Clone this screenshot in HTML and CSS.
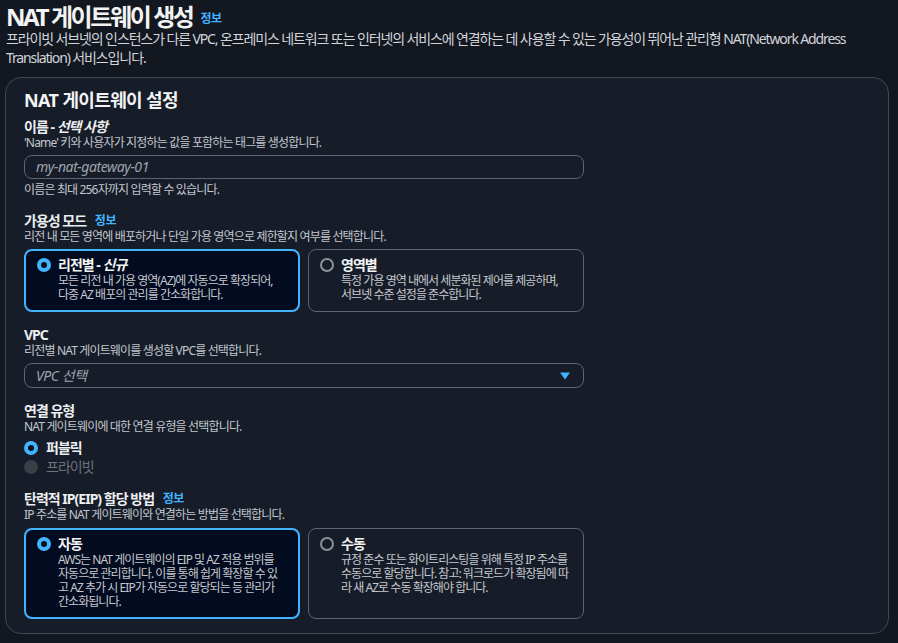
FILE: index.html
```html
<!DOCTYPE html>
<html lang="ko">
<head>
<meta charset="utf-8">
<title>NAT 게이트웨이 생성</title>
<link rel="stylesheet" href="styles.css">
</head>
<body>
<div class="page">
  <header class="page-header">
    <h1 class="page-title">NAT 게이트웨이 생성 <a class="info info-title">정보</a></h1>
    <p class="page-desc">프라이빗 서브넷의 인스턴스가 다른 VPC, 온프레미스 네트워크 또는 인터넷의 서비스에 연결하는 데 사용할 수 있는 가용성이 뛰어난 관리형 NAT(Network Address Translation) 서비스입니다.</p>
  </header>

  <section class="panel">
    <h2 class="panel-title">NAT 게이트웨이 설정</h2>

    <div class="field field-first">
      <div class="label">이름 - <em>선택 사항</em></div>
      <div class="hint">'Name' 키와 사용자가 지정하는 값을 포함하는 태그를 생성합니다.</div>
      <div class="control">
        <div class="input"><span class="placeholder">my-nat-gateway-01</span></div>
      </div>
      <div class="constraint">이름은 최대 256자까지 입력할 수 있습니다.</div>
    </div>

    <div class="field">
      <div class="label">가용성 모드 <a class="info">정보</a></div>
      <div class="hint">리전 내 모든 영역에 배포하거나 단일 가용 영역으로 제한할지 여부를 선택합니다.</div>
      <div class="control tiles">
        <div class="tile selected">
          <span class="radio checked"></span>
          <div class="tile-body">
            <div class="tile-title">리전별 - <em>신규</em></div>
            <div class="tile-desc">모든 리전 내 가용 영역(AZ)에 자동으로 확장되어, 다중 AZ 배포의 관리를 간소화합니다.</div>
          </div>
        </div>
        <div class="tile">
          <span class="radio"></span>
          <div class="tile-body">
            <div class="tile-title">영역별</div>
            <div class="tile-desc">특정 가용 영역 내에서 세분화된 제어를 제공하며, 서브넷 수준 설정을 준수합니다.</div>
          </div>
        </div>
      </div>
    </div>

    <div class="field">
      <div class="label">VPC</div>
      <div class="hint">리전별 NAT 게이트웨이를 생성할 VPC를 선택합니다.</div>
      <div class="control">
        <div class="input select">
          <span class="placeholder">VPC 선택</span>
          <svg class="caret" width="10" height="8" viewBox="0 0 10 8"><path d="M0 0.5 H10 L5 7.5 Z" fill="#42b4ff"/></svg>
        </div>
      </div>
    </div>

    <div class="field">
      <div class="label">연결 유형</div>
      <div class="hint">NAT 게이트웨이에 대한 연결 유형을 선택합니다.</div>
      <div class="control radios">
        <div class="radio-row"><span class="radio checked"></span><span class="radio-label">퍼블릭</span></div>
        <div class="radio-row disabled"><span class="radio off"></span><span class="radio-label">프라이빗</span></div>
      </div>
    </div>

    <div class="field">
      <div class="label">탄력적 IP(EIP) 할당 방법 <a class="info">정보</a></div>
      <div class="hint">IP 주소를 NAT 게이트웨이와 연결하는 방법을 선택합니다.</div>
      <div class="control tiles tiles-eip">
        <div class="tile selected">
          <span class="radio checked"></span>
          <div class="tile-body">
            <div class="tile-title">자동</div>
            <div class="tile-desc">AWS는 NAT 게이트웨이의 EIP 및 AZ 적용 범위를 자동으로 관리합니다. 이를 통해 쉽게 확장할 수 있고 AZ 추가 시 EIP가 자동으로 할당되는 등 관리가 간소화됩니다.</div>
          </div>
        </div>
        <div class="tile">
          <span class="radio"></span>
          <div class="tile-body">
            <div class="tile-title">수동</div>
            <div class="tile-desc">규정 준수 또는 화이트리스팅을 위해 특정 IP 주소를 수동으로 할당합니다. 참고: 워크로드가 확장됨에 따라 새 AZ로 수동 확장해야 합니다.</div>
          </div>
        </div>
      </div>
    </div>
  </section>
</div>
</body>
</html>
```

FILE: styles.css
```css
* { box-sizing: border-box; }

html, body {
  margin: 0;
  padding: 0;
  background: #13171f;
}

body {
  font-family: "Noto Sans", "Noto Sans CJK KR", sans-serif;
  color: #e9ebed;
  font-size: 14px;
  letter-spacing: -0.07em;
}

.page {
  padding: 5px 9px 0 5px;
}

.page-header {
  padding-left: 1px;
}

.page-title {
  margin: 0;
  font-size: 24px;
  line-height: 24px;
  font-weight: 700;
  color: #f2f3f3;
  letter-spacing: -0.1em;
}

.info {
  color: #42b4ff;
  font-size: 12px;
  font-weight: 700;
  line-height: 16px;
  margin-left: 6px;
  letter-spacing: -0.04em;
  vertical-align: 1px;
}

.info-title {
  margin-left: 4px;
  vertical-align: 3px;
}

.page-desc {
  margin: 0;
  font-size: 14px;
  line-height: 19px;
  color: #d1d5db;
  letter-spacing: -0.08em;
}

.panel {
  margin-top: 10px;
  background: #161d28;
  border: 1px solid #41464f;
  border-radius: 16px;
  padding: 10px 18px 14px 18px;
}

.panel-title {
  margin: 0;
  font-size: 18px;
  line-height: 24px;
  font-weight: 700;
  color: #f2f3f3;
  letter-spacing: -0.035em;
}

.field {
  margin-top: 15px;
  width: 560px;
}

.field-first {
  margin-top: 7px;
}

.label {
  font-size: 14px;
  line-height: 16px;
  font-weight: 700;
  color: #eceef0;
}

.label em {
  font-style: italic;
}

.hint,
.constraint {
  font-size: 12px;
  line-height: 16px;
  color: #c3c7ce;
  letter-spacing: -0.07em;
}

.control {
  margin-top: 4px;
}

.constraint {
  margin-top: 3px;
}

.input {
  height: 24px;
  border: 1px solid #5f646d;
  border-radius: 8px;
  display: flex;
  align-items: center;
  padding: 0 12px 0 11px;
}

.placeholder {
  font-style: italic;
  color: #9ea3ab;
  font-size: 14px;
  line-height: 18px;
  letter-spacing: -0.03em;
}

.select {
  height: 25px;
  justify-content: space-between;
}

.caret {
  display: block;
  margin-right: 1px;
}

.tiles {
  display: grid;
  grid-template-columns: 1fr 1fr;
  gap: 8px;
}

.tiles-eip {
  margin-top: 5px;
}

.tile {
  display: flex;
  align-items: flex-start;
  gap: 7px;
  border: 1px solid #5f646d;
  border-radius: 8px;
  padding: 6px 0 9px 11px;
}

.tile.selected {
  border: 2px solid #42b4ff;
  background: #020b1f;
  padding: 5px 0 8px 11px;
}

.tile .radio {
  margin-top: 2px;
}

.tile-body {
  flex: none;
  width: 229px;
}

.tile.selected .tile-body {
  width: 226.5px;
}

.tile-title {
  font-size: 14px;
  line-height: 18px;
  font-weight: 700;
  color: #f2f3f3;
}

.tile-desc {
  font-size: 12px;
  line-height: 14px;
  color: #c6c8ce;
  letter-spacing: -0.08em;
}

.radio {
  flex: none;
  width: 14px;
  height: 14px;
  border-radius: 50%;
  border: 2px solid #8c9099;
  display: inline-block;
}

.radio.checked {
  border: 4px solid #42b4ff;
  background: #0f141a;
}

.radio.off {
  border: none;
  background: #393e47;
}

.radios {
  display: flex;
  flex-direction: column;
  gap: 1px;
}

.radio-row {
  display: flex;
  align-items: center;
  gap: 8px;
  height: 18px;
}

.radio-label {
  font-size: 14px;
  line-height: 18px;
  font-weight: 700;
  color: #eceef0;
}

.radio-row.disabled .radio-label {
  font-weight: 400;
  color: #6d717a;
}
```
